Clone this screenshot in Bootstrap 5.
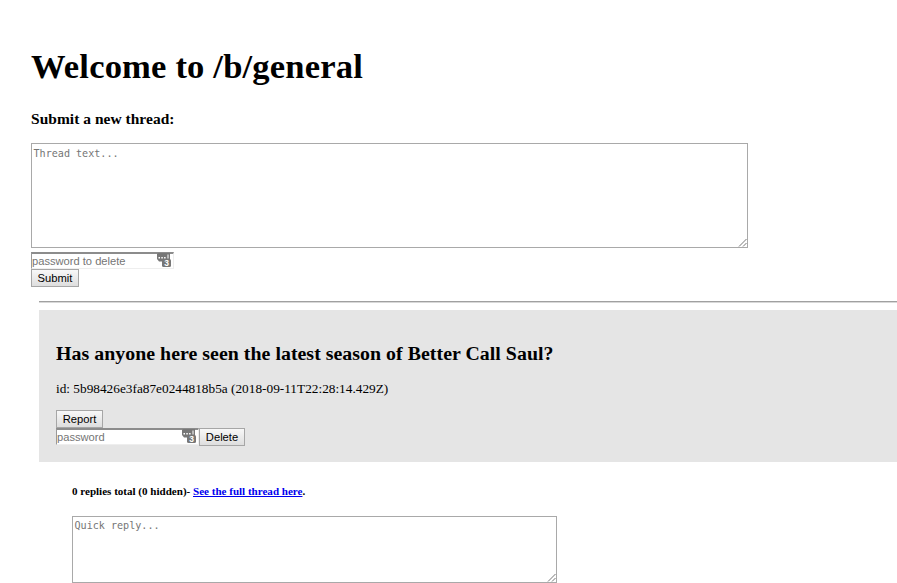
<!DOCTYPE html>
<html lang="en">
<head>
<meta charset="utf-8">
<title>/b/general</title>
<link href="https://cdn.jsdelivr.net/npm/bootstrap@5.3.0/dist/css/bootstrap.min.css" rel="stylesheet">
<style>
body{font-family:"Liberation Serif","Times New Roman",serif;color:#000;background:#fff;overflow:hidden;height:583px;font-size:13.3px;line-height:16px}
.board{padding:46px 0 0 31px}
.board-title{font-size:34.6px;line-height:40px;font-weight:700;margin:0;letter-spacing:.17px}
.form-title{font-size:15.46px;line-height:18px;font-weight:700;margin:24px 0 15px;letter-spacing:.04px}
.text-box{display:block;resize:none;border:1px solid #a9a9a9;border-radius:0;padding:2px 1.5px;background:#fff;font:10.1px/14px "DejaVu Sans Mono",monospace;outline:0;overflow:hidden;width:100%;height:100%}
.box-new{width:717px;height:105px}
.box-new .text-box{padding-top:3px}
.box-reply{width:485px;height:67px}
::placeholder{color:#757575;opacity:1}
.grip{position:absolute;right:1px;bottom:1px;width:9px;height:9px}
.pass{width:143px;height:17px}
.pass input{display:block;width:100%;height:100%;border:solid;border-width:2px 1px 1px 1px;border-color:#8c8c8c #eee #eee #999;border-radius:0;padding:0 1px 1px 0;background:#fff;font:11.15px/13px "Liberation Sans",Arial,sans-serif;outline:0}
.new-pass{margin-top:4px}
.key-icon{position:absolute;left:126px;top:0;width:14px;height:15px}
.push{display:block;height:18px;border:1px solid #a6a6a6;border-radius:0;background:linear-gradient(#f8f8f8,#dedede);color:#000;padding:0;font:11.2px/15px "Liberation Sans",Arial,sans-serif}
.push-submit{width:48px}.push-report{width:47px}.push-delete{width:46px}
.threads{margin:14px 0 0 8px}
.rule{height:2px;border-top:1px solid #a0a0a0;border-bottom:1px solid #d8d8d8;margin-bottom:7px}
.thread-head{background:#e5e5e5;height:152px;padding:31px 0 0 17px}
.thread-title{font-size:19.88px;line-height:24px;font-weight:700;margin:0 0 16px;letter-spacing:.03px}
.thread-id{margin:0 0 13px}
.replies{padding:22px 0 0 33px}
.reply-info{font-size:11.05px;line-height:14px;font-weight:700;margin:0 0 18px}
.reply-info a{color:#00e}
</style>
</head>
<body>
<svg class="d-none">
<symbol id="key" viewBox="0 0 14 15"><path d="M1 1h12v8.500H2L0 7V2z" fill="#777"/><path d="M1.500 5h1.500v1.500H1.500zM4.300 5h1.500v1.500H4.300zM7.100 5h1.500v1.500H7.100zM10.500 2.500h1v4h-1z" fill="#fff"/><rect x="5" y="7" width="9" height="8" rx="1.500" fill="#777"/><text x="9.600" y="14" font-family="Liberation Sans" font-size="8.500" font-weight="700" fill="#fff" text-anchor="middle">3</text></symbol>
<symbol id="grip" viewBox="0 0 9 9"><path d="M1 8.500L8.500 1M5 8.500L8.500 5" stroke="#777" fill="none"/></symbol>
</svg>
<main class="board">
<h1 class="board-title">Welcome to /b/general</h1>
<form>
<h3 class="form-title">Submit a new thread:</h3>
<div class="box-new position-relative"><textarea class="text-box" placeholder="Thread text..."></textarea><svg class="grip"><use href="#grip"/></svg></div>
<div class="pass new-pass position-relative"><input type="text" placeholder="password to delete"><svg class="key-icon"><use href="#key"/></svg></div>
<button type="button" class="push push-submit">Submit</button>
</form>
<section class="threads">
<div class="rule"></div>
<article class="thread-head">
<h2 class="thread-title">Has anyone here seen the latest season of Better Call Saul?</h2>
<p class="thread-id">id: 5b98426e3fa87e0244818b5a (2018-09-11T22:28:14.429Z)</p>
<button type="button" class="push push-report">Report</button>
<div class="d-flex"><div class="pass position-relative"><input type="text" placeholder="password"><svg class="key-icon"><use href="#key"/></svg></div><button type="button" class="push push-delete">Delete</button></div>
</article>
<div class="replies">
<h5 class="reply-info">0 replies total (0 hidden)- <a href="#">See the full thread here</a>.</h5>
<div class="box-reply position-relative"><textarea class="text-box" placeholder="Quick reply..."></textarea><svg class="grip"><use href="#grip"/></svg></div>
</div>
</section>
</main>
<script src="https://cdn.jsdelivr.net/npm/bootstrap@5.3.0/dist/js/bootstrap.bundle.min.js"></script>
</body>
</html>
